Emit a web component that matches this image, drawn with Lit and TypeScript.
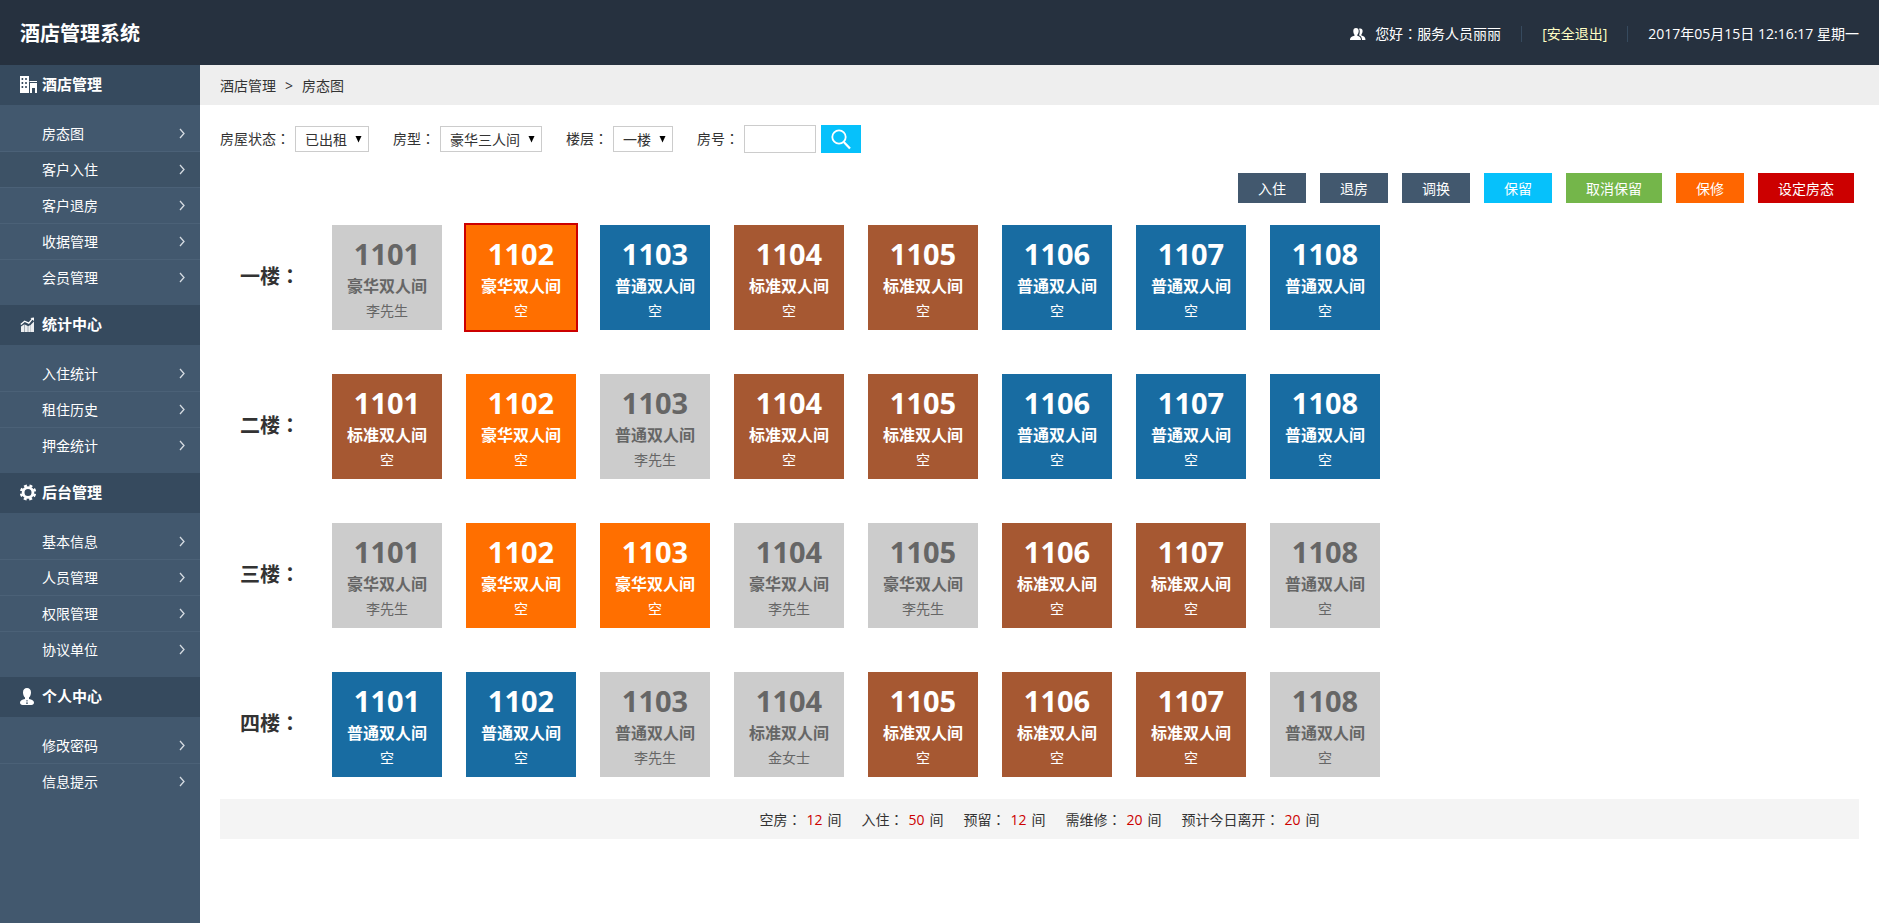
import { LitElement, html, css, svg } from "lit";
import { customElement, property, state } from "lit/decorators.js";
import { classMap } from "lit/directives/class-map.js";

type RoomKind = "taken" | "deluxe" | "standard" | "regular";
interface Room { no: string; type: string; guest: string; kind: RoomKind; }
interface Floor { name: string; rooms: Room[]; }
interface MenuGroup { icon: string; title: string; items: string[]; }

const DELUXE = "豪华双人间";
const STANDARD = "标准双人间";
const REGULAR = "普通双人间";
const TYPE_KIND: Record<string, RoomKind> = { [DELUXE]: "deluxe", [STANDARD]: "standard", [REGULAR]: "regular" };

/** A free room takes its colour from the room type; pass taken for an occupied one. */
const room = (n: number, type: string, guest = "空", taken = guest !== "空"): Room => ({
  no: String(1100 + n), type, guest, kind: taken ? "taken" : TYPE_KIND[type],
});

const FLOORS: Floor[] = [
  { name: "一楼", rooms: [
    room(1, DELUXE, "李先生"), room(2, DELUXE), room(3, REGULAR), room(4, STANDARD),
    room(5, STANDARD), room(6, REGULAR), room(7, REGULAR), room(8, REGULAR) ] },
  { name: "二楼", rooms: [
    room(1, STANDARD), room(2, DELUXE), room(3, REGULAR, "李先生"), room(4, STANDARD),
    room(5, STANDARD), room(6, REGULAR), room(7, REGULAR), room(8, REGULAR) ] },
  { name: "三楼", rooms: [
    room(1, DELUXE, "李先生"), room(2, DELUXE), room(3, DELUXE), room(4, DELUXE, "李先生"),
    room(5, DELUXE, "李先生"), room(6, STANDARD), room(7, STANDARD), room(8, REGULAR, "空", true) ] },
  { name: "四楼", rooms: [
    room(1, REGULAR), room(2, REGULAR), room(3, REGULAR, "李先生"), room(4, STANDARD, "金女士"),
    room(5, STANDARD), room(6, STANDARD), room(7, STANDARD), room(8, REGULAR, "空", true) ] },
];

const MENU: MenuGroup[] = [
  { icon: "building", title: "酒店管理", items: ["房态图", "客户入住", "客户退房", "收据管理", "会员管理"] },
  { icon: "chart", title: "统计中心", items: ["入住统计", "租住历史", "押金统计"] },
  { icon: "gear", title: "后台管理", items: ["基本信息", "人员管理", "权限管理", "协议单位"] },
  { icon: "person", title: "个人中心", items: ["修改密码", "信息提示"] },
];

const ACTIONS = [
  ["入住", "slate"], ["退房", "slate"], ["调换", "slate"], ["保留", "cyan"],
  ["取消保留", "green"], ["保修", "orange"], ["设定房态", "red"],
];

const SUMMARY: [string, number][] = [
  ["空房", 12], ["入住", 50], ["预留", 12], ["需维修", 20], ["预计今日离开", 20],
];

const ICONS: Record<string, unknown> = {
  building: svg`<path fill-rule="evenodd" d="M0 0h9v17H0zM1.6 2v2h1.6V2zm3.6 0v2h1.6V2zM1.6 6v2h1.6V6zm3.6 0v2h1.6V6zM1.6 10v2h1.6v-2zm3.6 0v2h1.6v-2z"/><path d="M9.5 5H17v1H9.5zM10 7h7v10h-2v-5h-3v5h-2z"/>`,
  chart: svg`<path d="M1 10.500l3.400-2.300V16H1zM4.800 8.600l3 1.400v6h-3zM8.200 10.300l2.600-1.600V16H8.200zM11 8.400L14 5.500V16h-3z" opacity=".9"/><path d="M.8 8.400l3.800-3.200 4.200 2 4-4.800" fill="none" stroke="currentColor" stroke-width="1.300"/><path d="M10.400 2L14 1.400V5z"/>`,
  gear: svg`<circle cx="8" cy="8.500" r="4.900" fill="none" stroke="currentColor" stroke-width="2.800"/><circle cx="8" cy="8.500" r="7" fill="none" stroke="currentColor" stroke-width="2.400" stroke-dasharray="2.950 2.548" transform="rotate(10.400 8 8.500)"/>`,
  person: svg`<path d="M7 0c2.500 0 4 1.800 4 4.400 0 2-.9 4.200-2 5.200v1.400c2.800.5 5 1.700 5 3.600 0 1.600-1 2.400-2.600 2.400H2.600C1 17 0 16.200 0 14.600 0 12.700 2.200 11.500 5 11V9.600C3.900 8.600 3 6.400 3 4.400 3 1.800 4.500 0 7 0z"/><path d="M6.400 12h1.200l-.4 1.400.6 2.600H6.200l.6-2.600z" fill="#364a5e"/>`,
  users: svg`<path d="M6 0c1.800 0 2.700 1.200 2.700 3S8 6.200 7.300 6.800v1C9.300 8.400 11 9.200 11 12H0c0-2.800 2.200-3.600 4.500-4.200v-1C3.900 6.200 3.300 4.800 3.300 3S4.200 0 6 0z"/><path d="M9 .8C9.300.5 9.800.4 10.300.4c1.500 0 2.300 1 2.300 2.700 0 1.500-.6 2.700-1.200 3.300v1.200c2.200.5 4.100 1.400 4.100 4.400H12c0-2.500-1-3.800-3-4.800C9.800 5.800 10.200 2.400 9 .8z"/>`,
  arrow: svg`<path d="M1 1l4 4.500L1 10" fill="none" stroke="currentColor" stroke-width="1.300"/>`,
  search: svg`<circle cx="8" cy="8" r="6.700" fill="none" stroke="currentColor" stroke-width="1.800"/><path d="M12.800 13l6.200 6.600" fill="none" stroke="currentColor" stroke-width="2.200"/>`,
};

const icon = (name: string, w: number, h: number) =>
  html`<svg width=${w} height=${h} viewBox="0 0 ${w} ${h}" fill="currentColor" aria-hidden="true">${ICONS[name]}</svg>`;

const colon = html`<span class="colon">：</span>`;

const shared = css`
  :host, :host * { box-sizing: border-box; }
  svg { display: block; flex: none; }
  a { color: inherit; text-decoration: none; }
  button, input, select { font: inherit; }
  .colon { font-family: "Noto Sans CJK TC", sans-serif; }
`;

@customElement("side-menu")
export class SideMenu extends LitElement {
  @property({ type: String }) current = "";

  static styles = [shared, css`
    :host { display: block; background: #42586e; color: #fff; }
    .title {
      display: flex; align-items: center; height: 40px; margin: 0; padding: 0 20px 2px;
      background: #364a5e; font-size: 15px; font-weight: 700;
    }
    .icon { width: 22px; flex: none; }
    .list { list-style: none; margin: 0; padding: 10px 0; }
    .item { border-top: 1px solid #4b6177; }
    .item:first-child { border-top-color: transparent; }
    .link {
      display: flex; align-items: center; justify-content: space-between;
      height: 35px; padding: 0 14px 0 42px;
    }
    .link svg { color: #d5dbe1; }
    .current { background: #3d5266; }
  `];

  render() {
    return html`<nav>${MENU.map((g) => html`
      <h2 class="title"><span class="icon">${icon(g.icon, 17, 17)}</span>${g.title}</h2>
      <ul class="list">${g.items.map((t) => html`
        <li class="item"><a href="#" class=${classMap({ link: true, current: t === this.current })}>
          <span>${t}</span>${icon("arrow", 7, 11)}</a></li>`)}
      </ul>`)}</nav>`;
  }
}

@customElement("room-board")
export class RoomBoard extends LitElement {
  @state() private selected = "一楼1102";

  static styles = [shared, css`
    :host { display: grid; gap: 44px; }
    .floor { display: flex; align-items: center; }
    .name { width: 92px; margin: 0; padding-bottom: 2px; flex: none; font-size: 20px; line-height: 28px; color: #333; }
    .rooms { display: flex; flex-wrap: wrap; gap: 24px; }
    .room {
      display: flex; flex-direction: column; align-items: center;
      width: 110px; height: 105px; padding: 12px 0 0; border: 0; color: #fff; cursor: pointer;
    }
    .no { font-size: 29px; line-height: 34px; font-weight: 700; }
    .type { font-size: 16px; line-height: 30px; font-weight: 700; }
    .guest { font-size: 14px; line-height: 20px; }
    .taken { background: #ccc; color: #666; }
    .deluxe { background: #ff6f00; }
    .standard { background: #a65832; }
    .regular { background: #186ca2; }
    .selected { outline: 2px solid #c00; }
  `];

  render() {
    return html`${FLOORS.map((f) => html`
      <section class="floor">
        <h3 class="name">${f.name}${colon}</h3>
        <div class="rooms">${f.rooms.map((r) => html`
          <button type="button"
            class=${classMap({ room: true, [r.kind]: true, selected: this.selected === f.name + r.no })}
            @click=${() => { this.selected = f.name + r.no; }}>
            <span class="no">${r.no}</span><span class="type">${r.type}</span><span class="guest">${r.guest}</span>
          </button>`)}</div>
      </section>`)}`;
  }
}

@customElement("app-root")
export class AppRoot extends LitElement {
  static styles = [shared, css`
    :host {
      display: flex; flex-direction: column; min-height: 100vh; background: #fff; color: #333;
      font: 14px/20px "Open Sans", "Noto Sans CJK SC", sans-serif;
    }
    .top {
      display: flex; align-items: center; justify-content: space-between;
      height: 65px; padding: 2px 20px 0; background: #26313f; color: #fff;
    }
    .brand { margin: 0; font-size: 20px; line-height: 28px; }
    .session { display: flex; align-items: center; }
    .user { display: flex; align-items: center; gap: 9px; padding-right: 20px; }
    .exit { padding: 0 20px; border: solid #364a5e; border-width: 0 1px; line-height: 16px; color: #ffffc4; }
    .clock { padding-left: 20px; }
    .body { display: flex; flex: 1; }
    side-menu { width: 200px; flex: none; }
    main { flex: 1; min-width: 0; }
    .crumbs { display: flex; align-items: center; gap: 9px; height: 40px; padding: 2px 20px 0; background: #eee; }
    .content { padding: 20px; }
    .filters { display: flex; align-items: center; gap: 24px; }
    .field { display: flex; align-items: center; gap: 5px; }
    .field label { padding-bottom: 2px; }
    .select {
      appearance: none; height: 26px; padding: 1px 21px 0 9px; border: 1px solid #ccc; border-radius: 0; color: #333;
      background: #fff url("data:image/svg+xml,%3Csvg xmlns='http://www.w3.org/2000/svg' width='7' height='7'%3E%3Cpath d='M.5 0h6L3.5 6.500z'/%3E%3C/svg%3E") no-repeat right 6px center;
    }
    .number { width: 72px; height: 28px; padding: 0 5px; border: 1px solid #ccc; }
    .search {
      display: grid; place-items: center; width: 40px; height: 28px; padding: 0;
      border: 0; background: #06c1fb; color: #fff;
    }
    .actions { display: flex; flex-wrap: wrap; justify-content: flex-end; gap: 14px; padding: 20px 5px 22px; }
    .action { height: 30px; padding: 2px 20px 0; border: 0; color: #fff; }
    .slate { background: #42586e; }
    .cyan { background: #06c1fb; }
    .green { background: #74b64a; }
    .orange { background: #ff6600; }
    .red { background: #cc0000; }
    room-board { padding: 0 20px; }
    .summary {
      display: flex; flex-wrap: wrap; justify-content: center; gap: 20px;
      margin-top: 22px; padding: 11px 0 9px; background: #f4f4f4;
    }
    .summary .colon { line-height: 1; }
    .count { margin: 0 5px; color: #c00; }
  `];

  private select(id: string, label: string, options: string[]) {
    return html`<div class="field"><label for=${id}>${label}${colon}</label>
      <select class="select" id=${id}>${options.map((o) => html`<option>${o}</option>`)}</select></div>`;
  }

  render() {
    return html`
      <header class="top">
        <h1 class="brand">酒店管理系统</h1>
        <div class="session">
          <span class="user">${icon("users", 16, 12)}<span>您好${colon}服务人员丽丽</span></span>
          <a class="exit" href="#">[安全退出]</a>
          <span class="clock">2017年05月15日 12:16:17 星期一</span>
        </div>
      </header>
      <div class="body">
        <side-menu current="客户入住"></side-menu>
        <main>
          <div class="crumbs"><a href="#">酒店管理</a><span>&gt;</span><span>房态图</span></div>
          <div class="content">
            <form class="filters" @submit=${(e: Event) => e.preventDefault()}>
              ${this.select("status", "房屋状态", ["已出租", "未出租"])}
              ${this.select("type", "房型", ["豪华三人间", "豪华双人间", "标准双人间"])}
              ${this.select("floor", "楼层", ["一楼", "二楼", "三楼", "四楼"])}
              <div class="field"><label for="number">房号${colon}</label>
                <input class="number" id="number" type="text">
                <button class="search" type="submit" aria-label="搜索">${icon("search", 20, 21)}</button>
              </div>
            </form>
            <div class="actions">${ACTIONS.map(([t, c]) => html`<button type="button" class="action ${c}">${t}</button>`)}</div>
            <room-board></room-board>
            <div class="summary">${SUMMARY.map(([t, n]) => html`<span>${t}${colon}<span class="count">${n}</span>间</span>`)}</div>
          </div>
        </main>
      </div>`;
  }
}
